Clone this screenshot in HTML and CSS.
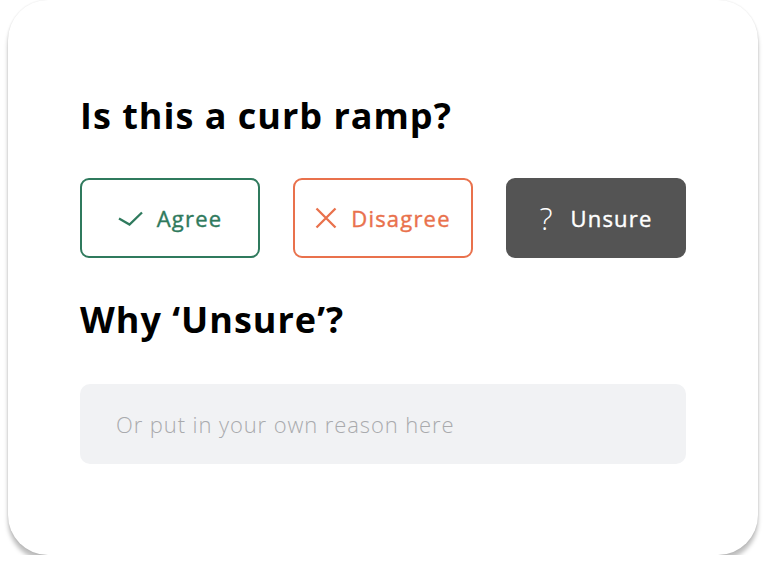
FILE: index.html
```html
<!DOCTYPE html>
<html>
<head>
<meta charset="utf-8">
<link rel="stylesheet" href="styles.css">
</head>
<body>
<div class="card">
  <h1 class="title">Is this a curb ramp?</h1>
  <div class="choices">
    <button class="choice agree">
      <svg class="icon" viewBox="0 0 25 15" width="25" height="15"><path d="M1 7.5 L11.5 13.5 L24 1.5" fill="none" stroke="currentColor" stroke-width="2.3"/></svg>
      <span class="label">Agree</span>
    </button>
    <button class="choice disagree">
      <svg class="icon" viewBox="0 0 22 22" width="22" height="22"><path d="M1.5 1.5 L20.5 20.5 M20.5 1.5 L1.5 20.5" fill="none" stroke="currentColor" stroke-width="2.3"/></svg>
      <span class="label">Disagree</span>
    </button>
    <button class="choice unsure">
      <span class="q">?</span>
      <span class="label">Unsure</span>
    </button>
  </div>
  <h2 class="title why">Why ‘Unsure’?</h2>
  <div class="reason">Or put in your own reason here</div>
</div>
</body>
</html>
```
FILE: styles.css
```css
html, body {
  margin: 0;
  padding: 0;
  background: #ffffff;
}
body {
  font-family: "Open Sans", Lato, sans-serif;
  padding: 0 8px 0 8px;
}
.card {
  box-sizing: border-box;
  width: 750px;
  height: 555px;
  background: #fff;
  border-radius: 40px;
  box-shadow: 0 6px 4px rgba(0,0,0,0.25), 0 0 2px rgba(0,0,0,0.12);
  padding: 92px 72px 0 72px;
}
.title {
  margin: 0;
  font-size: 36px;
  font-weight: 700;
  color: #000;
  line-height: 48px;
  letter-spacing: 1px;
}
.choices {
  display: flex;
  gap: 33px;
  margin-top: 38px;
}
.choice {
  box-sizing: border-box;
  width: 180px;
  height: 80px;
  border-radius: 9px;
  border: 2px solid;
  background: #fff;
  font-family: inherit;
  font-size: 22px;
  font-weight: 500;
  letter-spacing: 1.2px;
  display: flex;
  align-items: center;
  justify-content: center;
  gap: 14px;
  padding: 0;
}
.label { -webkit-text-stroke: 0.4px currentColor; }
.agree { color: #2f7a5d; border-color: #2f7a5d; }
.disagree { color: #e9714c; border-color: #e9714c; }
.unsure { color: #fff; background: #545454; border-color: #545454; gap: 18px; }
.q { font-size: 31px; font-weight: 300; letter-spacing: 0; }
.why { margin-top: 38px; }
.reason {
  margin-top: 40px;
  height: 80px;
  border-radius: 10px;
  background: #f1f2f4;
  color: #a9aaad;
  font-size: 22px;
  font-weight: 300;
  letter-spacing: 0.9px;
  display: flex;
  align-items: center;
  padding-left: 36px;
}
```
